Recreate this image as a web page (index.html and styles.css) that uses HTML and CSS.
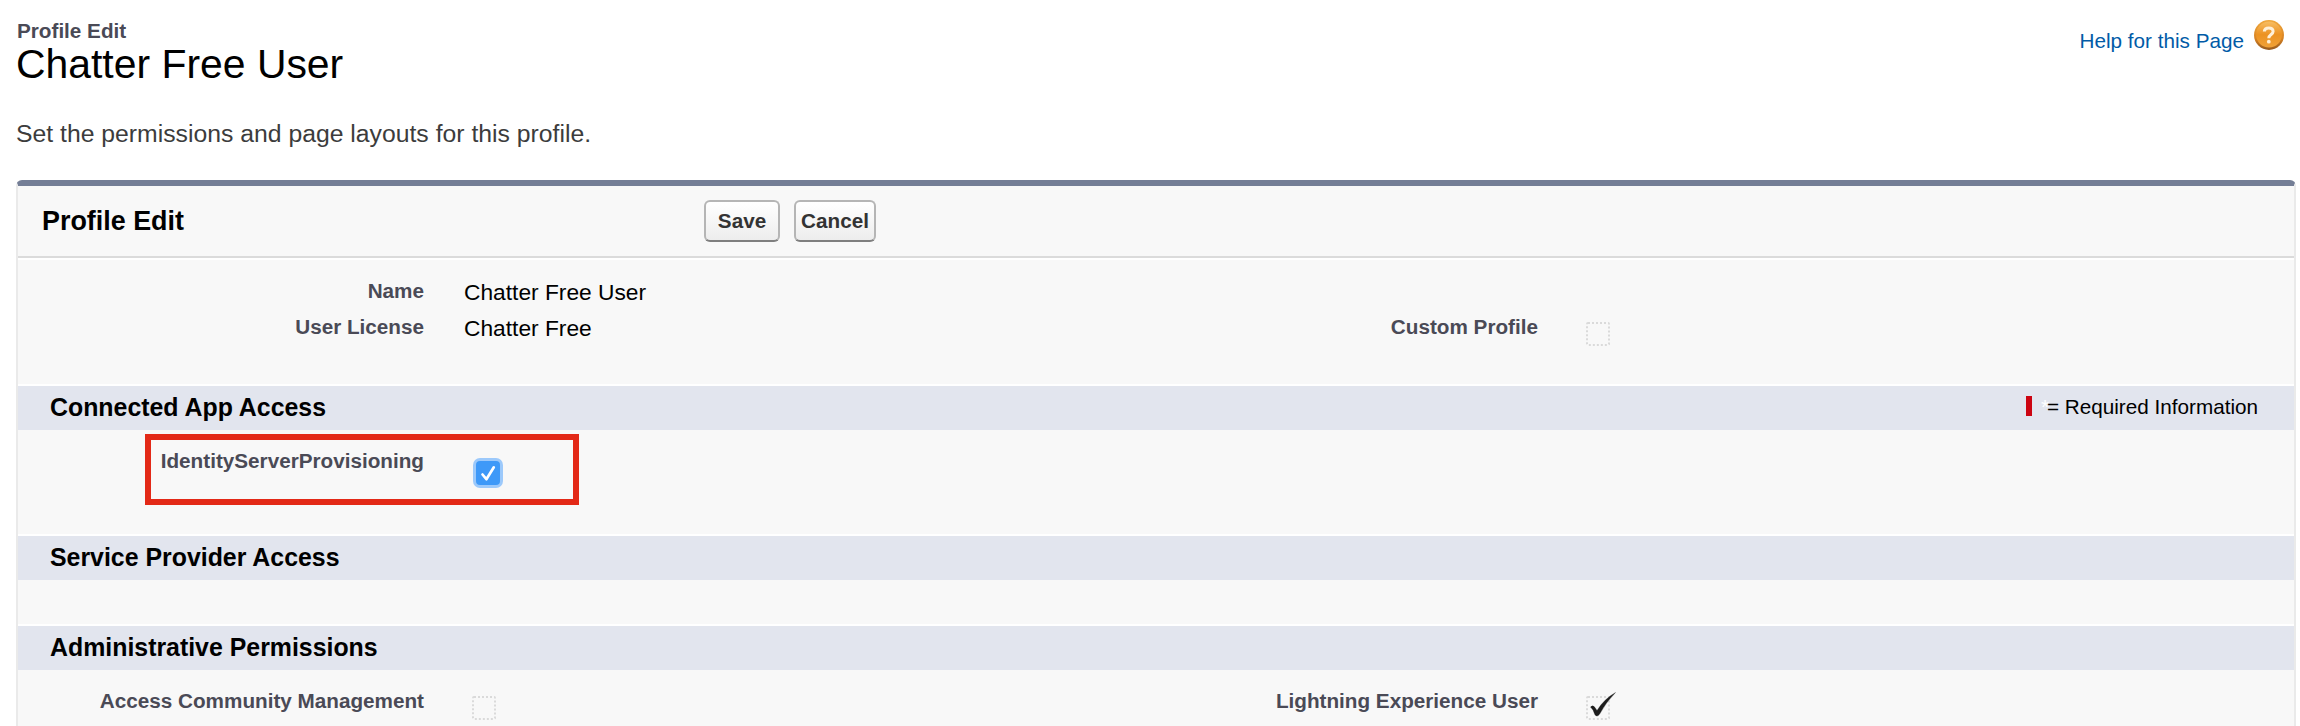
FILE: index.html
```html
<!DOCTYPE html>
<html lang="en">
<head>
<meta charset="utf-8">
<title>Profile Edit: Chatter Free User</title>
<link rel="stylesheet" href="styles.css">
</head>
<body>
<header class="page-header">
  <div>
    <div class="page-type">Profile Edit</div>
    <h1 class="page-title">Chatter Free User</h1>
  </div>
  <a class="help">
    <span>Help for this Page</span>
    <svg class="help-icon" viewBox="0 0 30 30">
      <defs>
        <linearGradient id="rim" x1="0" y1="0" x2="0" y2="1"><stop offset="0" stop-color="#f0a83c"/><stop offset=".6" stop-color="#d98424"/><stop offset="1" stop-color="#96591c"/></linearGradient>
        <linearGradient id="disc" x1="0" y1="0" x2="0" y2="1"><stop offset="0" stop-color="#f7bd62"/><stop offset=".5" stop-color="#ec9222"/><stop offset="1" stop-color="#f0a238"/></linearGradient>
      </defs>
      <circle cx="15" cy="15" r="15" fill="url(#rim)"/>
      <circle cx="15" cy="14.6" r="13" fill="url(#disc)"/>
      <path d="M10.300 11.500C10.500 8.900 12.300 8 14.700 8c2.700 0 4.400 1.300 4.400 3.500 0 2.900-4.300 3.200-4.300 6.700" fill="none" stroke="#fff0d8" stroke-width="3"/>
      <circle cx="14.800" cy="21.700" r="1.900" fill="#fff0d8"/>
    </svg>
  </a>
</header>
<p class="description">Set the permissions and page layouts for this profile.</p>

<main class="panel">
  <div class="panel-header">
    <h2 class="panel-title">Profile Edit</h2>
    <div class="buttons">
      <button class="btn btn-save">Save</button>
      <button class="btn btn-cancel">Cancel</button>
    </div>
  </div>

  <div class="fields details">
    <div class="label">Name</div><div class="value">Chatter Free User</div>
    <div></div><div></div>
    <div class="label">User License</div><div class="value">Chatter Free</div>
    <div class="label">Custom Profile</div>
    <div class="check"><svg class="box" viewBox="0 0 34 30"><rect class="dots" x="1" y="6" width="22" height="22" rx="1"/></svg></div>
  </div>

  <div class="section-bar">
    <h3>Connected App Access</h3>
    <div class="required"><span class="mark"></span><span class="star">*</span><span>= Required Information</span></div>
  </div>
  <div class="fields connected">
    <div class="label">IdentityServerProvisioning</div>
    <div class="check">
      <svg class="checked" viewBox="0 0 30 30">
        <rect width="30" height="30" rx="7" fill="#9cc9fb"/>
        <rect x="3" y="3" width="24" height="24" rx="4" fill="#3e99f8"/>
        <path d="M9.500 16.500l3.900 4.700L20.800 9.300" fill="none" stroke="#fff" stroke-width="2.700" stroke-linecap="round" stroke-linejoin="round"/>
      </svg>
    </div>
    <div class="highlight"></div>
  </div>

  <div class="section-bar"><h3>Service Provider Access</h3></div>
  <div class="fields provider"></div>

  <div class="section-bar"><h3>Administrative Permissions</h3></div>
  <div class="fields admin">
    <div class="label">Access Community Management</div>
    <div class="check"><svg class="box" viewBox="0 0 34 30"><rect class="dots" x="1" y="6" width="22" height="22" rx="1"/></svg></div>
    <div class="label">Lightning Experience User</div>
    <div class="check">
      <svg class="box" viewBox="0 0 34 30">
        <rect class="dots" x="1" y="6" width="22" height="22" rx="1"/>
        <path d="M4.500 16Q7 13.500 9 16.500L11 19.500Q18 8 29.500 1.500Q19.500 12 14 22.500Q11 27 8.800 23.500Q7.500 18.500 4.500 16Z" fill="#1c1c1c" stroke="#1c1c1c" stroke-width=".3"/>
      </svg>
    </div>
  </div>
</main>
</body>
</html>
```
FILE: styles.css
```css
* { box-sizing: border-box; }

body {
  margin: 0;
  height: 726px;
  overflow: hidden;
  background: #fff;
  color: #000;
  font-family: "Liberation Sans", Arial, Helvetica, sans-serif;
  font-size: 20.7px;
}

h1, h2, h3, p { margin: 0; }

.page-header {
  display: flex;
  justify-content: space-between;
  height: 112px;
  padding: 19px 16px 0 17px;
}

.page-type {
  font-weight: bold;
  line-height: 24px;
  color: #4a4a56;
}

.page-title {
  padding-top: 1px;
  margin-left: -1px;
  font-size: 40.9px;
  font-weight: normal;
  line-height: 40px;
}

.help {
  display: flex;
  gap: 10px;
  height: 32px;
  color: #015ba7;
  line-height: 43px;
}

.help-icon {
  width: 30px;
  height: 30px;
  margin-top: 1px;
}

.description {
  height: 68px;
  padding: 6px 0 0 16px;
  font-size: 24.76px;
  line-height: 32px;
  color: #3c3c3c;
}

.panel {
  width: 2280px;
  height: 546px;
  margin-left: 16px;
  border: 2px solid #eaeaea;
  border-top: 6px solid #747e96;
  border-bottom: 0;
  border-radius: 6px 6px 0 0;
  background: #f8f8f8;
}

.panel-header {
  display: grid;
  grid-template-columns: 662px 1fr;
  height: 74px;
  padding: 14px 0 0 24px;
  border-bottom: 2px solid #fff;
  box-shadow: inset 0 -2px #dbdbdb;
}

.panel-title {
  font-size: 26.9px;
  line-height: 42px;
}

.buttons {
  display: flex;
  gap: 14px;
}

.btn {
  height: 42px;
  padding: 0 0 1px;
  border: 2px solid #b5b5b5;
  border-bottom-color: #7f7f7f;
  border-radius: 6px;
  background: linear-gradient(#fff, #ededed);
  color: #333;
  font: bold 20.7px/34px "Liberation Sans", Arial, sans-serif;
}

.btn-save { width: 76px; }
.btn-cancel { width: 82px; }

.fields {
  display: grid;
  grid-template-columns: 406px 708px 406px 1fr;
  grid-auto-rows: 36px;
}

.details { height: 124px; padding-top: 13px; }
.connected { position: relative; height: 104px; padding-top: 13px; }
.provider { height: 44px; }
.admin { padding-top: 13px; }

.label {
  font-weight: bold;
  line-height: 36px;
  color: #4a4a56;
  text-align: right;
}

.value {
  padding: 1px 0 0 40px;
  font-size: 22.75px;
  line-height: 37px;
}

.check { padding-left: 48px; }

.box {
  display: block;
  width: 34px;
  height: 30px;
  margin-top: 8px;
}

.dots {
  fill: none;
  stroke: #dadada;
  stroke-width: 2;
  stroke-dasharray: 2 2;
}

.checked {
  display: block;
  width: 30px;
  height: 30px;
  margin: 15px 0 0 1px;
}

/* Annotation frame drawn over the form row */
.highlight {
  position: absolute;
  left: 127px;
  top: 4px;
  width: 434px;
  height: 71px;
  border: 6px solid #e32917;
}

.section-bar {
  display: flex;
  justify-content: space-between;
  height: 46px;
  padding: 0 36px 0 32px;
  border-top: 2px solid #fff;
  background: #e2e5ee;
}

.section-bar h3 {
  font-size: 24.88px;
  line-height: 42px;
}

.required {
  display: flex;
  line-height: 42px;
}

.mark {
  width: 6px;
  height: 20px;
  margin: 10px 9px 0 0;
  background: #cc0411;
}

.star {
  width: 6px;
  color: #fff;
}
```
